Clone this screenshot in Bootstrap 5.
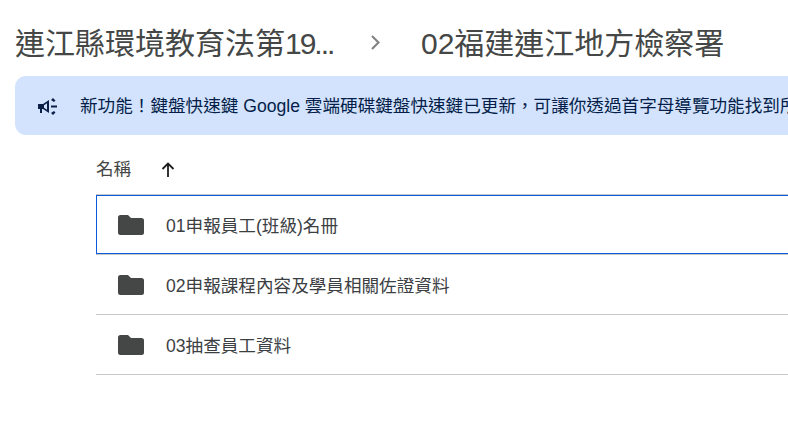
<!DOCTYPE html>
<html lang="zh-Hant">
<head>
<meta charset="utf-8">
<title>02福建連江地方檢察署</title>
<link rel="stylesheet" href="https://cdn.jsdelivr.net/npm/bootstrap@5.3.0/dist/css/bootstrap.min.css">
<style>
html,body{height:100%;overflow:hidden;background:#fff}
body{font-family:"Liberation Sans","Noto Sans CJK TC",sans-serif;color:#1f1f1f}
.crumbs{height:76px;padding:10px 0 0 15px;font-size:30px;color:#444746;white-space:nowrap}
.crumb-first{width:320px}
.crumb-tight{letter-spacing:-2px}
.crumb-sep{width:86px;padding-left:35px}
.notice{height:59px;margin-left:15px;background:#d3e3fd;color:#041e49;border-radius:11px 0 0 11px;font-size:17.6px;white-space:nowrap;overflow:hidden;padding-top:2px}
.notice-icon{width:65px;padding-left:22px;flex:none}
.file-area{margin:0 -10px 0 96px}
.sort-row{height:60px;font-size:17.6px;color:#444746;border-bottom:1px solid #c7c7c7;padding-top:10px}
.sort-arrow{margin-left:28px}
.file-row{height:60px;font-size:17.6px;color:#3c4043;border-bottom:1px solid #c7c7c7;padding:3px 0 0 22px;white-space:nowrap}
.file-row.picked{height:59px;border:1px solid #0b5cdb;padding-left:21px;margin-bottom:1px;position:relative}
.file-row.picked::after{content:"";position:absolute;left:-1px;right:-1px;bottom:-2px;border-bottom:1px solid #c7c7c7}
.folder-icon{width:48px;flex:none;margin-top:-3px}
</style>
</head>
<body>
<div class="crumbs d-flex align-items-center">
  <span class="crumb-first">連江縣環境教育法第<span class="crumb-tight">19...</span></span>
  <span class="crumb-sep d-flex align-items-center">
    <svg width="14" height="16" viewBox="0 0 14 16"><path d="M2 1 8.500 7.500 2 14" fill="none" stroke="#7d7f81" stroke-width="2"/></svg>
  </span>
  <span>02福建連江地方檢察署</span>
</div>
<div class="notice d-flex align-items-center">
  <span class="notice-icon d-flex align-items-center">
    <svg width="22" height="20" viewBox="0 0 22 20" fill="#0b1f47"><path fill-rule="evenodd" d="M1 7h5l6-4v13l-6-4H5v4H3v-4H1zM7 8.200v2.600l3 2v-6.600z"/><path d="M14 8.500h6v2h-6zM14 3l2-2 2.500 2.500-1.500 1.500zM14 16l2 2 2.500-2.500-1.500-1.500z"/></svg>
  </span>
  <span>新功能！鍵盤快速鍵 Google 雲端硬碟鍵盤快速鍵已更新，可讓你透過首字母導覽功能找到所有檔案</span>
</div>
<div class="file-area">
  <div class="sort-row d-flex align-items-center">
    <span>名稱</span>
    <svg class="sort-arrow" width="18" height="18" viewBox="0 0 18 18"><path d="M9 16V3M3.500 8 9 2.500 14.500 8" fill="none" stroke="#1f1f1f" stroke-width="1.800"/></svg>
  </div>
  <div class="file-row picked d-flex align-items-center">
    <span class="folder-icon"><svg class="d-block" width="26" height="20" viewBox="0 0 26 20"><path d="M2.500 0H10l3 3h10.500A2.500 2.500 0 0 1 26 5.500V17.500A2.500 2.500 0 0 1 23.500 20H2.500A2.500 2.500 0 0 1 0 17.500V2.500A2.500 2.500 0 0 1 2.500 0z" fill="#444746"/></svg></span>
    <span>01申報員工(班級)名冊</span>
  </div>
  <div class="file-row d-flex align-items-center">
    <span class="folder-icon"><svg class="d-block" width="26" height="20" viewBox="0 0 26 20"><path d="M2.500 0H10l3 3h10.500A2.500 2.500 0 0 1 26 5.500V17.500A2.500 2.500 0 0 1 23.500 20H2.500A2.500 2.500 0 0 1 0 17.500V2.500A2.500 2.500 0 0 1 2.500 0z" fill="#444746"/></svg></span>
    <span>02申報課程內容及學員相關佐證資料</span>
  </div>
  <div class="file-row d-flex align-items-center">
    <span class="folder-icon"><svg class="d-block" width="26" height="20" viewBox="0 0 26 20"><path d="M2.500 0H10l3 3h10.500A2.500 2.500 0 0 1 26 5.500V17.500A2.500 2.500 0 0 1 23.500 20H2.500A2.500 2.500 0 0 1 0 17.500V2.500A2.500 2.500 0 0 1 2.500 0z" fill="#444746"/></svg></span>
    <span>03抽查員工資料</span>
  </div>
</div>
<script src="https://cdn.jsdelivr.net/npm/bootstrap@5.3.0/dist/js/bootstrap.bundle.min.js"></script>
</body>
</html>
